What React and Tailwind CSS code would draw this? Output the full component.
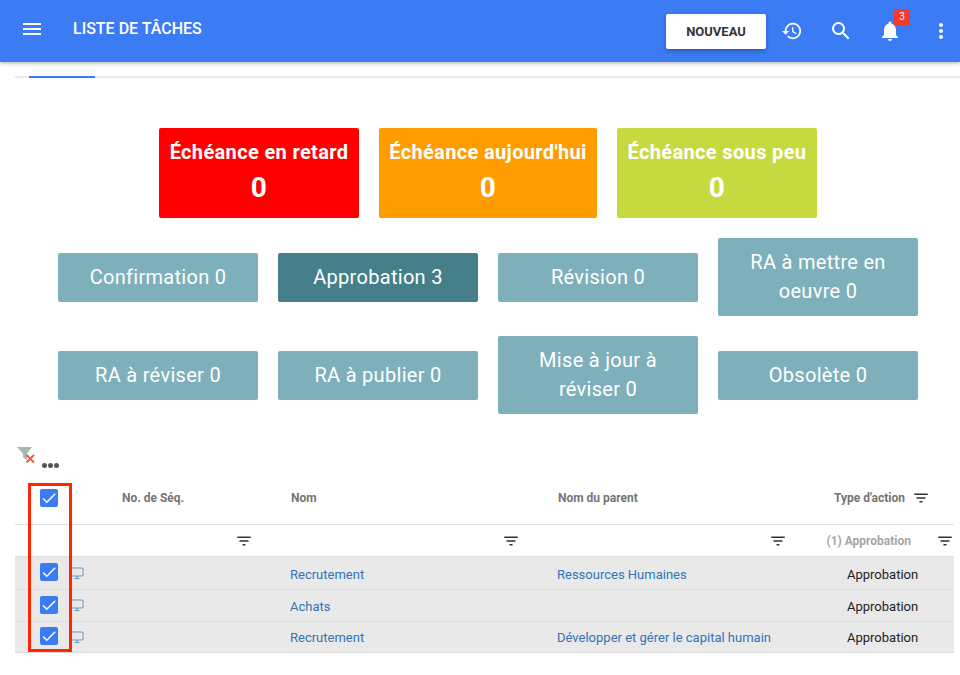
import React from "react";
import { MdMenu, MdHistory, MdSearch, MdNotifications, MdMoreVert, MdFilterList, MdCheck } from "react-icons/md";

const deadlines = [
  { label: "Échéance en retard", color: "bg-[#ff0000]", width: "w-[200px]" },
  { label: "Échéance aujourd'hui", color: "bg-[#ff9c00]", width: "w-[218px]" },
  { label: "Échéance sous peu", color: "bg-[#c6da3f]", width: "w-[200px]" },
];

const stages = [
  [
    { label: "Confirmation 0" },
    { label: "Approbation 3", active: true },
    { label: "Révision 0" },
    { label: "RA à mettre en oeuvre 0" },
  ],
  [
    { label: "RA à réviser 0" },
    { label: "RA à publier 0" },
    { label: "Mise à jour à réviser 0" },
    { label: "Obsolète 0" },
  ],
];

const rows = [
  { name: "Recrutement", parent: "Ressources Humaines", height: "h-[33px]", text: "pt-[3px]" },
  { name: "Achats", parent: "", height: "h-[32px]", text: "pt-[2px]" },
  { name: "Recrutement", parent: "Développer et gérer le capital humain", height: "h-[31px]", text: "pt-[2px]" },
];

const gridCols = "grid grid-cols-[100px_168px_267px_267px_137px]";

const Checkbox = () => (
  <span className="flex h-[18px] w-[18px] items-center justify-center rounded-[2px] bg-[#3b7cf4] text-white">
    <MdCheck size={18} />
  </span>
);

const Monitor = () => (
  <svg width="14" height="13" viewBox="0 0 14 13" fill="none" stroke="#4f7fae" strokeWidth="0.8">
    <rect x="1.4" y="1" width="11.6" height="8" rx="0.5" />
    <path d="M7 9v2M4.5 11.5h5" />
  </svg>
);

const FilterClear = () => (
  <svg width="20" height="18" viewBox="0 0 20 18">
    <path d="M0 0h15L10 6.5V13L6 10.5V6.5z" fill="#a9b5b0" />
    <path d="M9.5 8l7.5 7.5M17 8l-7.5 7.5" stroke="#f4563a" strokeWidth="1.8" fill="none" />
  </svg>
);

const Filter = () => <MdFilterList size={18} className="text-[#333]" />;

const App = () => {
  return (
    <div className="relative h-[675px] w-[960px] overflow-hidden bg-white font-['Roboto',sans-serif]">
      <header className="relative z-10 flex h-[62px] items-center bg-[#3b7cf4] pl-[20px] pr-[7px] text-white shadow-[0_1px_4px_rgba(0,0,0,0.35)]">
        <MdMenu size={24} className="mb-[5px]" />
        <h1 className="ml-[29px] mb-[4px] text-[16px] font-medium">LISTE DE TÂCHES</h1>
        <button className="ml-auto mb-[-1px] h-[35px] w-[100px] rounded-[2px] bg-white text-[13px] font-bold text-[#333] shadow-[0_2px_5px_rgba(0,0,0,0.3)]">
          NOUVEAU
        </button>
        <MdHistory size={22} className="ml-[15px] mb-[1px]" />
        <MdSearch size={24} className="ml-[26px] mb-[1px]" />
        <div className="relative mb-[1px] ml-[25px]">
          <MdNotifications size={24} />
          <span className="absolute right-[-8px] top-[-10px] flex h-[16px] w-[16px] items-center justify-center rounded-[1px] bg-[#f4392f] text-[10px]">
            3
          </span>
        </div>
        <MdMoreVert size={24} className="ml-[27px] mb-[1px]" />
      </header>

      <div className="ml-[15px] mt-[14px] h-[2px] bg-[#e9e9e9]">
        <div className="ml-[14px] h-[2px] w-[66px] bg-[#3b7cf4]" />
      </div>

      <section className="flex flex-col items-center pl-[16px] pt-[50px]">
        <div className="flex gap-[20px]">
          {deadlines.map((d) => (
            <div
              key={d.label}
              className={`flex h-[90px] flex-col items-center rounded-[2px] pt-[11px] font-bold tracking-[0.35px] text-white ${d.color} ${d.width}`}
            >
              <span className="whitespace-nowrap text-[20px] leading-[26px]">{d.label}</span>
              <span className="mt-[5px] text-[28px] leading-[36px]">0</span>
            </div>
          ))}
        </div>
        {stages.map((row, i) => (
          <div key={i} className="mt-[20px] flex h-[78px] items-center gap-[20px]">
            {row.map((s) => (
              <div
                key={s.label}
                className={`flex w-[200px] items-center justify-center rounded-[2px] px-[20px] py-[10px] text-center text-[20px] leading-[29px] tracking-[0.3px] text-white ${
                  s.active ? "bg-[#457f8a]" : "bg-[#7db0bb]"
                }`}
              >
                {s.label}
              </div>
            ))}
          </div>
        ))}
      </section>

      <div className="ml-[17px] mt-[33px] flex h-[23px] items-start">
        <FilterClear />
        <span className="ml-[5px] mt-[16px] flex gap-[1px]">
          <i className="h-[5px] w-[5px] rounded-full bg-[#555]" />
          <i className="h-[5px] w-[5px] rounded-full bg-[#555]" />
          <i className="h-[5px] w-[5px] rounded-full bg-[#555]" />
        </span>
      </div>

      <div className="relative ml-[15px] mt-[10px] w-[939px]">
        <div className={`${gridCols} h-[45px] border-b border-[#dfdfdf] pt-[8px] text-[12px] font-bold text-[#757575]`}>
          <div className="pl-[25px] pt-[1px]">
            <Checkbox />
          </div>
          <div className="pl-[7px] pt-[1px]">No. de Séq.</div>
          <div className="pl-[8px] pt-[1px]">Nom</div>
          <div className="pl-[8px] pt-[1px]">Nom du parent</div>
          <div className="flex justify-end gap-[7px] pr-[24px] pt-[1px]">
            <span>Type d'action</span>
            <Filter />
          </div>
        </div>

        <div className={`${gridCols} h-[32px] items-center border-b border-[#dfdfdf] pt-[1px] text-[12px] font-bold text-[#a6a6a6]`}>
          <div />
          <div className="flex justify-end pr-[30px]"><Filter /></div>
          <div className="flex justify-end pr-[30px]"><Filter /></div>
          <div className="flex justify-end pr-[30px]"><Filter /></div>
          <div className="flex items-center justify-end gap-[25px]">
            <span>(1) Approbation</span>
            <Filter />
          </div>
        </div>

        {rows.map((r, i) => (
          <div
            key={i}
            className={`${gridCols} items-center border-b border-[#dcdcdc] bg-[#e9e9e9] text-[13px] ${r.height}`}
          >
            <div className="flex items-center pl-[25px]">
              <span className="mb-[2px]"><Checkbox /></span>
              <span className="ml-[12px]"><Monitor /></span>
            </div>
            <div />
            <div className={`pl-[7px] text-[#3473b5] ${r.text}`}>{r.name}</div>
            <div className={`pl-[7px] text-[#3473b5] ${r.text}`}>{r.parent}</div>
            <div className={`pl-[30px] text-[#222] ${r.text}`}>Approbation</div>
          </div>
        ))}

        <div className="absolute left-[13px] top-[3px] h-[169px] w-[44px] border-[3px] border-[#ff2600]" />
      </div>
    </div>
  );
};

export default App;
